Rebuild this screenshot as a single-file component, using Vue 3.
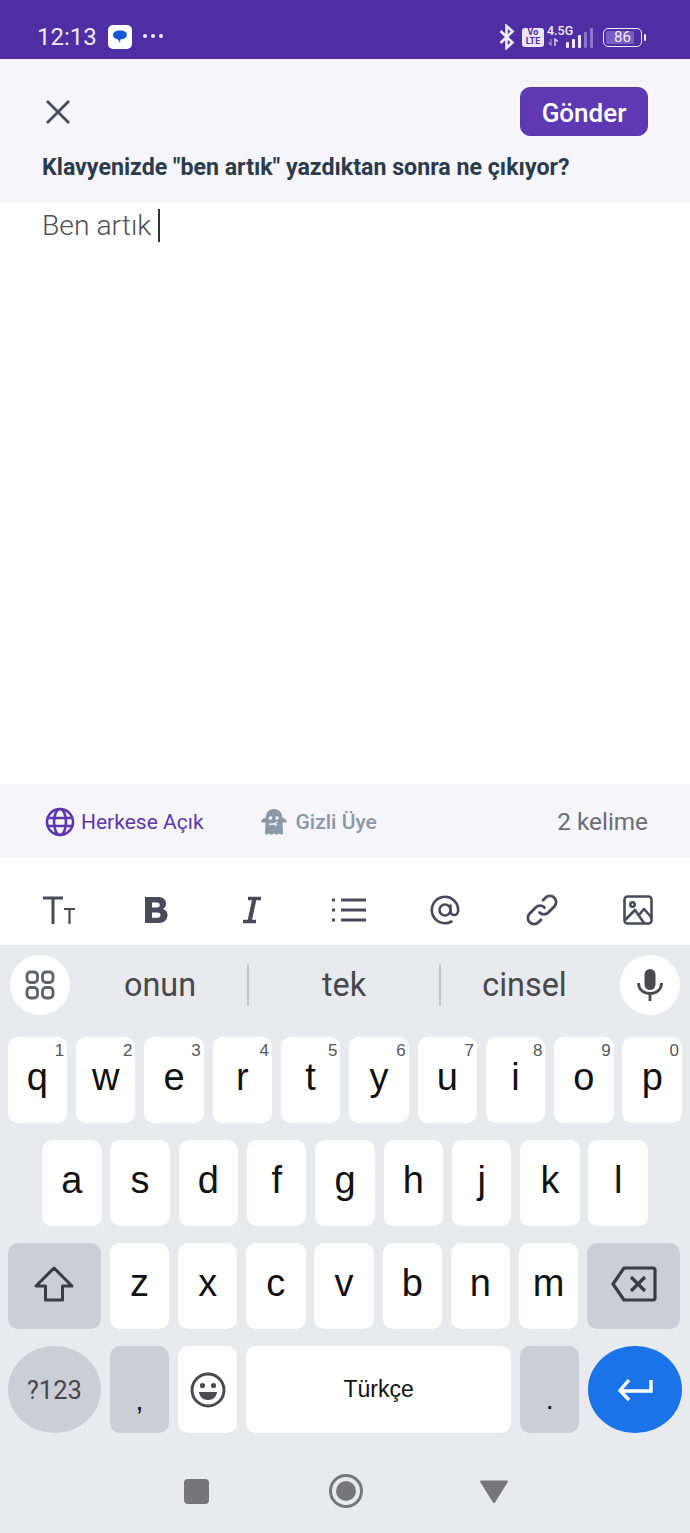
<script setup>
const row1 = [
  ['q', '1'], ['w', '2'], ['e', '3'], ['r', '4'], ['t', '5'],
  ['y', '6'], ['u', '7'], ['i', '8'], ['o', '9'], ['p', '0']
]
const row2 = ['a', 's', 'd', 'f', 'g', 'h', 'j', 'k', 'l']
const row3 = ['z', 'x', 'c', 'v', 'b', 'n', 'm']
</script>

<template>
  <div class="screen">
    <div class="status-bar">
      <span class="time">12:13</span>
      <span class="app-icon">
        <svg width="24" height="24" viewBox="0 0 24 24">
          <rect width="24" height="24" rx="5" fill="#fff" />
          <path d="M12 5.500c-4.200 0-7 1.700-7 4.600 0 2.500 2.200 4 5 4.300l2.200 3.600v-3.500c3.800-.2 6.800-1.800 6.800-4.400 0-2.900-2.800-4.600-7-4.600z" fill="#1259d6" />
          <path d="M15 14.200c2.500-.6 4-2 4-4.100 0-1-.3-1.800-1-2.500 1.200 3-.6 5.200-3 6.600z" fill="#6fa8f5" />
        </svg>
      </span>
      <span class="dots"><i></i><i></i><i></i></span>
      <div class="status-right">
        <svg class="bt" width="18" height="26" viewBox="0 0 18 26" fill="none" stroke="#f1ecfa" stroke-width="2.600">
          <path d="M2.500 7l12 11.500L8.500 24V2l6 5.500L2.500 19" />
        </svg>
        <span class="volte"><b>Vo</b><b>LTE</b></span>
        <span class="net">
          <span class="net-label">4.5G</span>
          <svg width="16" height="9" viewBox="0 0 16 9" fill="none">
            <path d="M3 1v7M0.500 4.500L3 7" stroke="#a897d6" stroke-width="1.200" />
            <path d="M7 8V1l3 2.500" stroke="#e6dff5" stroke-width="1.400" />
          </svg>
          <span class="bars"><i></i><i></i><i></i><i class="dim"></i><i class="dim"></i></span>
        </span>
        <span class="battery">
          <span class="battery-body"><span class="battery-fill"></span><span class="battery-num">86</span></span>
          <span class="battery-tip"></span>
        </span>
      </div>
    </div>

    <header class="head">
      <div class="head-top">
        <svg class="close" width="28" height="28" viewBox="0 0 28 28" stroke="#4a4a5c" stroke-width="2.800" fill="none">
          <path d="M3 3l22 22M25 3L3 25" />
        </svg>
        <button class="send">Gönder</button>
      </div>
      <h1 class="question">Klavyenizde "ben artık" yazdıktan sonra ne çıkıyor?</h1>
    </header>

    <main class="editor">
      <span class="typed">Ben artık</span><span class="caret"></span>
    </main>

    <section class="meta">
      <span class="public">
        <svg width="30" height="30" viewBox="0 0 30 30" fill="none" stroke="#5e35b1" stroke-width="2.600">
          <circle cx="15" cy="15" r="13" />
          <ellipse cx="15" cy="15" rx="6" ry="13" />
          <path d="M2 11h26M2 19h26" />
        </svg>
        Herkese Açık
      </span>
      <span class="anon">
        <svg width="28" height="28" viewBox="0 0 28 28">
          <path d="M14 1c-5 0-8 3.500-8.200 8.500C3.500 10.500 1 12 1 13.500c0 1.200 2 1.200 4.500 1L5 25c0 2 2.500 2 4 .5 1.500 1.500 3 1.500 5 0 2 1.500 3.500 1.500 5 0 1.500 1.500 4 1.500 4-.5l-.5-10.500c2.500.2 4.500.2 4.500-1 0-1.500-2.500-3-4.800-4C22 4.500 19 1 14 1z" fill="#8b98a8" />
          <circle cx="10.500" cy="10" r="1.800" fill="#f5f5fa" />
          <circle cx="17" cy="10" r="1.800" fill="#f5f5fa" />
          <path d="M9 16c3 .5 6 0 8.500-2M14 15.500c.5 1.500 2 2 3 1" stroke="#f5f5fa" stroke-width="1.400" fill="none" />
        </svg>
        Gizli Üye
      </span>
      <span class="words">2 kelime</span>
    </section>

    <section class="toolbar">
      <span class="tool tt">
        <svg width="34" height="30" viewBox="0 0 34 30" fill="none" stroke="#4a4a5c">
          <path d="M1 3h20M11 3v26" stroke-width="3" />
          <path d="M22 14h11M27.500 14v15" stroke-width="2.200" />
        </svg>
      </span>
      <span class="tool">
        <svg width="24" height="28" viewBox="0 0 24 28">
          <path fill-rule="evenodd" d="M1 1h13c5 0 8 2.500 8 6.500 0 2.500-1 4.300-3 5.400 3 1 4.500 3.200 4.500 6.100 0 5-3.500 8-9 8H1zM8 6.500v5h5c1.800 0 2.800-1 2.800-2.500s-1-2.500-2.800-2.500zm0 10v5.200h5.500c2 0 3-1 3-2.600s-1-2.600-3-2.600z" fill="#4a4a5c" />
        </svg>
      </span>
      <span class="tool">
        <svg width="20" height="28" viewBox="0 0 20 28" fill="none" stroke="#4a4a5c">
          <path d="M6 2.500h13M1 25.500h13" stroke-width="3.600" />
          <path d="M12.500 2.500L7.500 25.500" stroke-width="4.200" />
        </svg>
      </span>
      <span class="tool">
        <svg width="34" height="26" viewBox="0 0 34 26" fill="none" stroke="#4a4a5c" stroke-width="2.800">
          <path d="M9 3h25M9 13h25M9 23h25" />
          <path d="M0 3h3M0 13h3M0 23h3" />
        </svg>
      </span>
      <span class="tool">
        <svg width="30" height="30" viewBox="0 0 30 30" fill="none" stroke="#4a4a5c" stroke-width="2.600" stroke-linecap="round">
          <path d="M21.500 26.500A13.200 13.200 0 1 1 28.200 15c0 3-1.700 5-4 5s-3.700-1.800-3.700-4v-5.500" />
          <circle cx="15" cy="15" r="5.500" />
        </svg>
      </span>
      <span class="tool">
        <svg width="32" height="32" viewBox="0 0 32 32" fill="none" stroke="#4a4a5c" stroke-width="2.800" stroke-linecap="round">
          <path d="M13.500 18.500a6.200 6.200 0 0 0 8.800 0l6-6a6.200 6.200 0 0 0-8.800-8.800l-2.500 2.500" />
          <path d="M18.500 13.500a6.200 6.200 0 0 0-8.800 0l-6 6a6.200 6.200 0 0 0 8.800 8.800l2.500-2.500" />
        </svg>
      </span>
      <span class="tool">
        <svg width="30" height="30" viewBox="0 0 30 30" fill="none" stroke="#4a4a5c" stroke-width="2.600" stroke-linejoin="round">
          <rect x="1.500" y="1.500" width="27" height="27" rx="3" />
          <circle cx="9.500" cy="9.500" r="2.200" />
          <path d="M2 25l10-10 9 13M16 20l5-6 8 9" />
        </svg>
      </span>
    </section>

    <section class="keyboard">
      <div class="suggestions">
        <span class="round-btn">
          <svg width="30" height="30" viewBox="0 0 30 30" fill="none" stroke="#5f6368" stroke-width="2.800">
            <rect x="2" y="2" width="10.500" height="10.500" rx="3.500" />
            <rect x="17.500" y="2" width="10.500" height="10.500" rx="3.500" />
            <rect x="2" y="17.500" width="10.500" height="10.500" rx="3.500" />
            <rect x="17.500" y="17.500" width="10.500" height="10.500" rx="3.500" />
          </svg>
        </span>
        <span class="word w1">onun</span>
        <span class="sep"></span>
        <span class="word w2">tek</span>
        <span class="sep"></span>
        <span class="word w3">cinsel</span>
        <span class="round-btn mic">
          <svg width="26" height="34" viewBox="0 0 26 34">
            <rect x="7.500" y="1" width="11" height="21" rx="5.500" fill="#4a4a4f" />
            <path d="M1.500 15c0 6.500 5 10.500 11.500 10.500S24.500 21.500 24.500 15M13 25v8" fill="none" stroke="#4a4a4f" stroke-width="2.800" />
          </svg>
        </span>
      </div>

      <div class="keys">
        <div class="row row-ten">
          <button v-for="k in row1" :key="k[0]" class="key">
            {{ k[0] }}<sup class="hint">{{ k[1] }}</sup>
          </button>
        </div>
        <div class="row row-nine">
          <button v-for="k in row2" :key="k" class="key">{{ k }}</button>
        </div>
        <div class="row row-mixed">
          <button class="key fn wide">
            <svg width="42" height="38" viewBox="0 0 42 38" fill="none" stroke="#3c3c40" stroke-width="3" stroke-linejoin="round">
              <path d="M21 3L3 21h9.500v14h17V21H39z" />
            </svg>
          </button>
          <button v-for="k in row3" :key="k" class="key">{{ k }}</button>
          <button class="key fn wide">
            <svg width="46" height="36" viewBox="0 0 46 36" fill="none" stroke="#3c3c40" stroke-width="3.200" stroke-linejoin="round">
              <path d="M13 2h29a2 2 0 0 1 2 2v28a2 2 0 0 1-2 2H13L2 18z" />
              <path d="M20 11l14 14M34 11L20 25" />
            </svg>
          </button>
        </div>
        <div class="row row-mixed last">
          <button class="key fn wide pill sym">?123</button>
          <button class="key fn punct comma">,</button>
          <button class="key">
            <svg width="36" height="36" viewBox="0 0 36 36">
              <circle cx="18" cy="18" r="16" fill="none" stroke="#4a4a4f" stroke-width="3" />
              <circle cx="12.500" cy="13.500" r="2.600" fill="#4a4a4f" />
              <circle cx="23.500" cy="13.500" r="2.600" fill="#4a4a4f" />
              <path d="M9 20h18c-.5 5-4 8-9 8s-8.500-3-9-8z" fill="#4a4a4f" />
            </svg>
          </button>
          <button class="key space">Türkçe</button>
          <button class="key fn punct dot">.</button>
          <button class="key wide pill enter">
            <svg width="36" height="24" viewBox="0 0 36 24" fill="none" stroke="#fff" stroke-width="3.400">
              <path d="M34 2v11H4M12 2L3 12.500 12 22" />
            </svg>
          </button>
        </div>
      </div>

      <nav class="nav">
        <span class="nav-square"></span>
        <span class="nav-circle"><span></span></span>
        <svg class="nav-back" width="30" height="25" viewBox="0 0 30 25">
          <path d="M2 1.500h26a1 1 0 0 1 .8 1.600L16 23.500a1.200 1.200 0 0 1-2 0L1.200 3.100A1 1 0 0 1 2 1.500z" fill="#77777b" />
        </svg>
      </nav>
    </section>
  </div>
</template>

<style>
html, body {
  margin: 0;
  background: #fff;
}
</style>

<style scoped>
.screen {
  width: 690px;
  height: 1533px;
  display: flex;
  flex-direction: column;
  overflow: hidden;
  font-family: Roboto, "Liberation Sans", sans-serif;
}

.status-bar {
  height: 59px;
  flex: none;
  background: #4f2da2;
  display: flex;
  align-items: center;
  padding: 15px 44px 0 37px;
  box-sizing: border-box;
  color: #f1ecfa;
}
.time {
  font-size: 24px;
}
.app-icon {
  margin-left: 11px;
  display: flex;
}
.dots {
  display: flex;
  gap: 4px;
  margin-left: 11px;
  margin-bottom: 2px;
}
.dots i {
  width: 4px;
  height: 4px;
  border-radius: 50%;
  background: #f1ecfa;
}
.status-right {
  margin-left: auto;
  display: flex;
  align-items: center;
}
.bt {
  margin-right: 6px;
}
.volte {
  width: 22px;
  height: 19px;
  background: #ece7f8;
  border-radius: 3px;
  color: #4f2da2;
  display: flex;
  flex-direction: column;
  align-items: center;
  font-size: 9px;
  line-height: 9.500px;
}
.net {
  position: relative;
  width: 46px;
  height: 22px;
  margin-left: 3px;
  display: block;
}
.net-label {
  position: absolute;
  left: 0;
  top: -3px;
  font-size: 12.500px;
  font-weight: 500;
}
.net svg {
  position: absolute;
  left: 1px;
  top: 12px;
}
.bars {
  position: absolute;
  right: 0;
  bottom: 0;
  display: flex;
  align-items: flex-end;
  gap: 2.500px;
}
.bars i {
  width: 3.500px;
  background: #f1ecfa;
  border-radius: 1px;
}
.bars i:nth-child(1) { height: 6px; }
.bars i:nth-child(2) { height: 9px; }
.bars i:nth-child(3) { height: 13px; }
.bars i:nth-child(4) { height: 16px; }
.bars i:nth-child(5) { height: 20px; }
.bars i.dim {
  background: #8d75c8;
}
.battery {
  display: flex;
  align-items: center;
  margin-left: 10px;
}
.battery-body {
  position: relative;
  width: 39px;
  height: 19px;
  border: 1.500px solid #f1ecfa;
  border-radius: 5px;
  box-sizing: border-box;
  display: block;
}
.battery-fill {
  position: absolute;
  left: 2px;
  top: 2px;
  bottom: 2px;
  width: 28px;
  background: #7a5cc4;
  border-radius: 1.500px;
}
.battery-num {
  position: absolute;
  left: 0;
  right: 0;
  top: 0;
  text-align: center;
  font-size: 15px;
  line-height: 16px;
}
.battery-tip {
  width: 2px;
  height: 7px;
  margin-left: 2px;
  background: #f1ecfa;
  border-radius: 1px;
}

.head {
  height: 144px;
  flex: none;
  background: #f5f5fa;
  box-sizing: border-box;
  padding: 28px 42px 0 42px;
  display: flex;
  flex-direction: column;
}
.head-top {
  display: flex;
  justify-content: space-between;
  align-items: center;
}
.close {
  margin-left: 2px;
}
.send {
  width: 128px;
  height: 49px;
  border: 1px solid #5a35ae;
  border-radius: 10px;
  background: #5e39b3;
  color: #fff;
  font-family: inherit;
  font-size: 26px;
  font-weight: 500;
  padding: 3px 0 0;
}
.question {
  margin: 18px 0 0;
  font-size: 23.200px;
  line-height: 26px;
  font-weight: 700;
  color: #2b3b4b;
  white-space: nowrap;
}

.editor {
  flex: 1;
  padding: 6px 42px 0;
  display: flex;
  align-items: flex-start;
  color: #4f4f55;
  font-size: 28.300px;
  font-weight: 300;
  line-height: 34px;
}
.typed {
  white-space: pre;
}
.caret {
  width: 2px;
  height: 33px;
  background: #333;
  margin-left: 7px;
}

.meta {
  height: 74px;
  flex: none;
  background: #f5f5fa;
  box-sizing: border-box;
  padding: 1px 42px 0 45px;
  display: flex;
  align-items: center;
  font-size: 21px;
}
.public {
  display: flex;
  align-items: center;
  gap: 6px;
  color: #5e35b1;
}
.anon {
  display: flex;
  align-items: center;
  gap: 8px;
  margin-left: 56px;
  color: #8b98a8;
  font-weight: 500;
}
.words {
  margin-left: auto;
  color: #6c6c72;
  font-size: 24.300px;
}

.toolbar {
  height: 87px;
  flex: none;
  background: #fff;
  box-sizing: border-box;
  padding: 17px 34px 0 41px;
  display: flex;
  align-items: center;
  justify-content: space-between;
}
.tool {
  width: 36px;
  height: 36px;
  display: flex;
  align-items: center;
  justify-content: center;
}

.keyboard {
  flex: none;
  height: 588px;
  background: #e8eaed;
  display: flex;
  flex-direction: column;
}
.suggestions {
  height: 92px;
  box-sizing: border-box;
  padding: 10px 10px 22px;
  display: flex;
  align-items: center;
}
.round-btn {
  width: 60px;
  height: 60px;
  flex: none;
  border-radius: 50%;
  background: #fff;
  display: flex;
  align-items: center;
  justify-content: center;
}
.mic {
  margin-left: auto;
}
.word {
  color: #47474c;
  font-size: 32.400px;
  text-align: center;
  box-sizing: border-box;
}
.w1 {
  width: 177px;
  padding-left: 3px;
}
.w2 { width: 190px; }
.w3 { width: 167px; }
.sep {
  width: 2px;
  height: 42px;
  background: #c4c6ca;
  flex: none;
}

.keys {
  display: flex;
  flex-direction: column;
  gap: 17.500px;
}
.row {
  height: 85.500px;
  display: grid;
  box-sizing: border-box;
  column-gap: 8.800px;
}
.row-ten {
  grid-template-columns: repeat(10, 1fr);
  padding: 0 8px 0 7.600px;
}
.row-nine {
  grid-template-columns: repeat(9, 1fr);
  padding: 0 42px;
}
.row-mixed {
  display: flex;
  padding: 0 8px 0 7.600px;
  gap: 8.800px;
}
.row-mixed.last {
  height: 87px;
}
.row-mixed.last .key {
  padding-bottom: 0;
}
.key {
  position: relative;
  border: 0;
  padding: 0 0 4px;
  background: #fff;
  border-radius: 10px;
  font-family: "Liberation Sans", Arial, sans-serif;
  font-size: 38px;
  color: #111;
  display: flex;
  align-items: center;
  justify-content: center;
  min-width: 0;
}
.row-mixed .key {
  width: 59.400px;
  flex: none;
}
.row-mixed .key.wide {
  width: 93.400px;
}
.row-mixed .key.space {
  width: 265px;
  font-size: 23px;
}
.hint {
  position: absolute;
  top: 4px;
  right: 3px;
  font-size: 17px;
  line-height: 20px;
  color: #55555a;
}
.fn {
  background: #ccced5;
}
.pill {
  border-radius: 50%;
}
.row-mixed .key.sym {
  font-family: Roboto, sans-serif;
  font-size: 25.500px;
  color: #47474c;
}
.row-mixed.last .punct {
  font-size: 28px;
}
.row-mixed.last .dot {
  padding-top: 20px;
}
.row-mixed.last .comma {
  padding-top: 22px;
}
.enter {
  background: #1a73e8;
}

.nav {
  flex: 1;
  display: flex;
  align-items: center;
  justify-content: center;
  gap: 120px;
  padding: 16px 0 0 2px;
}
.nav-back {
  margin-left: -4px;
}
.nav-square {
  width: 25px;
  height: 25px;
  border-radius: 4px;
  background: #77777b;
}
.nav-circle {
  width: 34px;
  height: 34px;
  border: 3px solid #77777b;
  border-radius: 50%;
  display: flex;
  align-items: center;
  justify-content: center;
  box-sizing: border-box;
}
.nav-circle span {
  width: 20px;
  height: 20px;
  border-radius: 50%;
  background: #77777b;
}
</style>
